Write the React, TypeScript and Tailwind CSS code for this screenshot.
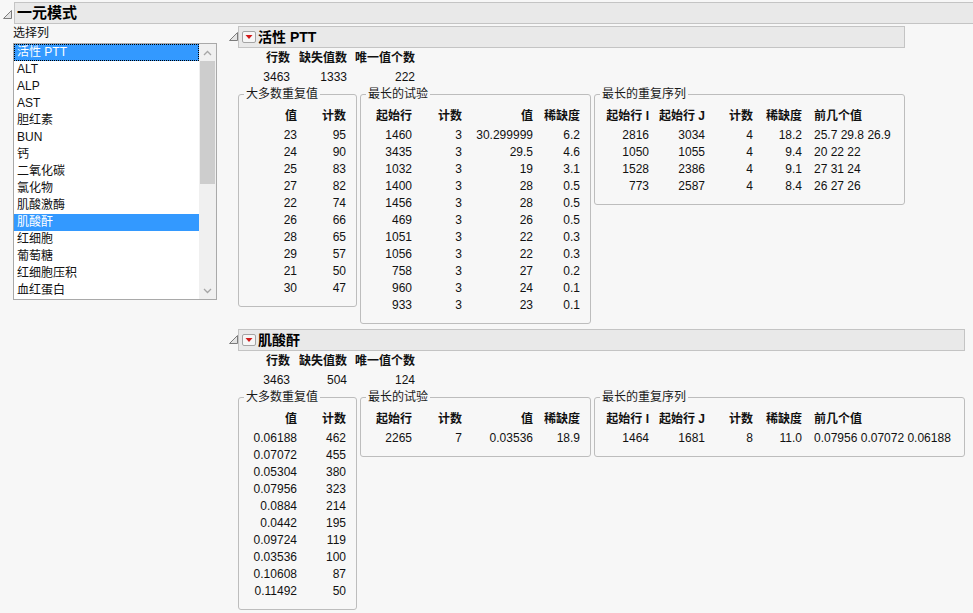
import React from "react"

const FONT = "font-['Liberation_Sans','Noto_Sans_CJK_SC',sans-serif]"

type Cell = string | number

// open disclosure triangle
function Disclosure() {
    return (
        <svg width="9" height="9" viewBox="0 0 9 9" className="shrink-0">
            <polygon points="8.5,0.5 8.5,8.5 0.5,8.5" fill="#e4e4e4" stroke="#7c7c7c" strokeWidth="1" />
        </svg>
    )
}

function RedMenu() {
    return (
        <svg width="14" height="12" viewBox="0 0 14 12" className="shrink-0">
            <rect x="0.5" y="0.5" width="13" height="11" rx="1.5" fill="#f6f6f6" stroke="#a4a4a4" />
            <polygon points="3.5,4 10.5,4 7,8" fill="#d11a1a" />
        </svg>
    )
}

function GroupBox({
    title,
    cols,
    head,
    rows,
    pl,
}: {
    title: string
    cols: { w?: number; left?: boolean }[]
    head: string[]
    rows: Cell[][]
    pl: number
}) {
    const colClass = (i: number) =>
        cols[i].left ? "pl-[12px] pr-[13px] text-left whitespace-nowrap" : "text-right whitespace-nowrap"
    return (
        <fieldset className="border border-[#bdbdbd] rounded-[3px] p-0 m-0 min-w-0">
            <legend className="ml-[5px] px-[2px] leading-[17px] text-[#1a1a1a]">{title}</legend>
            <div className="pt-[5px] pb-[9px]" style={{ paddingLeft: pl }}>
                <div className="flex font-bold leading-[17px] mb-[2px]">
                    {head.map((h, i) => (
                        <div key={i} className={colClass(i)} style={cols[i].w ? { width: cols[i].w } : undefined}>
                            {h}
                        </div>
                    ))}
                    {!cols[cols.length - 1].left && <div className="w-[10px]" />}
                </div>
                {rows.map((r, ri) => (
                    <div key={ri} className="flex leading-[17px]">
                        {r.map((c, i) => (
                            <div key={i} className={colClass(i)} style={cols[i].w ? { width: cols[i].w } : undefined}>
                                {c}
                            </div>
                        ))}
                        {!cols[cols.length - 1].left && <div className="w-[10px]" />}
                    </div>
                ))}
            </div>
        </fieldset>
    )
}

type Report = {
    title: string
    summary: Cell[]
    frequent: Cell[][]
    runs: Cell[][]
    seqs: Cell[][]
}

function ReportBlock({ r }: { r: Report }) {
    return (
        <div className="flex">
            <div className="w-[9px] pt-[6px] shrink-0">
                <Disclosure />
            </div>
            <div className="flex flex-col w-fit">
                <div className="h-[22px] border border-[#c4c4c4] bg-[#e9e9e9] flex items-center gap-[2px] pl-[3px]">
                    <RedMenu />
                    <span className="text-[14px] font-bold leading-[18px] text-black">{r.title}</span>
                </div>
                <div className="mt-[2px] flex font-bold leading-[17px]">
                    <div className="w-[52px] text-right">行数</div>
                    <div className="w-[57px] text-right">缺失值数</div>
                    <div className="w-[68px] text-right">唯一值个数</div>
                </div>
                <div className="mt-[2px] flex leading-[17px]">
                    {r.summary.map((v, i) => (
                        <div key={i} className={["w-[52px]", "w-[57px]", "w-[68px]"][i] + " text-right"}>
                            {v}
                        </div>
                    ))}
                </div>
                <div className="flex items-start gap-[3px]">
                    <GroupBox
                        title="大多数重复值"
                        pl={10}
                        cols={[{ w: 48 }, { w: 49 }]}
                        head={["值", "计数"]}
                        rows={r.frequent}
                    />
                    <GroupBox
                        title="最长的试验"
                        pl={5}
                        cols={[{ w: 46 }, { w: 50 }, { w: 71 }, { w: 47 }]}
                        head={["起始行", "计数", "值", "稀缺度"]}
                        rows={r.runs}
                    />
                    <GroupBox
                        title="最长的重复序列"
                        pl={6}
                        cols={[{ w: 48 }, { w: 56 }, { w: 48 }, { w: 49 }, { left: true }]}
                        head={["起始行 I", "起始行 J", "计数", "稀缺度", "前几个值"]}
                        rows={r.seqs}
                    />
                </div>
            </div>
        </div>
    )
}

const reports: Report[] = [
    {
        title: "活性 PTT",
        summary: [3463, 1333, 222],
        frequent: [
            [23, 95], [24, 90], [25, 83], [27, 82], [22, 74],
            [26, 66], [28, 65], [29, 57], [21, 50], [30, 47],
        ],
        runs: [
            [1460, 3, "30.299999", "6.2"],
            [3435, 3, "29.5", "4.6"],
            [1032, 3, 19, "3.1"],
            [1400, 3, 28, "0.5"],
            [1456, 3, 28, "0.5"],
            [469, 3, 26, "0.5"],
            [1051, 3, 22, "0.3"],
            [1056, 3, 22, "0.3"],
            [758, 3, 27, "0.2"],
            [960, 3, 24, "0.1"],
            [933, 3, 23, "0.1"],
        ],
        seqs: [
            [2816, 3034, 4, "18.2", "25.7 29.8 26.9"],
            [1050, 1055, 4, "9.4", "20 22 22"],
            [1528, 2386, 4, "9.1", "27 31 24"],
            [773, 2587, 4, "8.4", "26 27 26"],
        ],
    },
    {
        title: "肌酸酐",
        summary: [3463, 504, 124],
        frequent: [
            ["0.06188", 462], ["0.07072", 455], ["0.05304", 380], ["0.07956", 323], ["0.0884", 214],
            ["0.0442", 195], ["0.09724", 119], ["0.03536", 100], ["0.10608", 87], ["0.11492", 50],
        ],
        runs: [[2265, 7, "0.03536", "18.9"]],
        seqs: [[1464, 1681, 8, "11.0", "0.07956 0.07072 0.06188"]],
    },
]

const columns = [
    "活性 PTT", "ALT", "ALP", "AST", "胆红素", "BUN", "钙", "二氧化碳",
    "氯化物", "肌酸激酶", "肌酸酐", "红细胞", "葡萄糖", "红细胞压积", "血红蛋白",
]

export default function App() {
    return (
        <div className={`w-[973px] h-[613px] overflow-hidden bg-[#f7f7f7] text-[12px] text-[#111] ${FONT}`}>
            {/* top outline header */}
            <div className="flex items-start pt-[2px]">
                <div className="w-[14px] pl-[3px] pt-[8px] shrink-0">
                    <Disclosure />
                </div>
                <div className="flex-1 h-[22px] border border-[#c4c4c4] border-r-0 bg-[#e9e9e9] flex items-center pl-[2px]">
                    <span className="text-[15px] font-bold leading-[18px] text-black">一元模式</span>
                </div>
            </div>

            <div className="flex">
                {/* column chooser */}
                <div className="w-[229px] shrink-0 pl-[13px] pt-[1px]">
                    <div className="leading-[17px] text-[#111]">选择列</div>
                    <div className="mt-[1px] w-[204px] h-[257px] border border-[#a9a9a9] bg-white flex">
                        <div className="flex-1 flex flex-col">
                            {columns.map((c) => {
                                const sel = c === "活性 PTT" || c === "肌酸酐"
                                const focus = c === "活性 PTT"
                                return (
                                    <div
                                        key={c}
                                        className={`h-[17px] leading-[15px] pl-[2px] ${
                                            sel ? "bg-[#3399ff] text-white" : "text-[#111]"
                                        } ${focus ? "border border-dotted border-black" : "border border-transparent"}`}
                                    >
                                        {c}
                                    </div>
                                )
                            })}
                        </div>
                        <div className="w-[17px] bg-[#f0f0f0] flex flex-col">
                            <div className="h-[17px] flex items-center justify-center">
                                <svg width="9" height="6" viewBox="0 0 9 6">
                                    <polyline points="1,5 4.5,1.5 8,5" fill="none" stroke="#a6a6a6" strokeWidth="1.3" />
                                </svg>
                            </div>
                            <div className="h-[123px] mx-[1px] bg-[#cdcdcd]" />
                            <div className="flex-1" />
                            <div className="h-[17px] flex items-center justify-center">
                                <svg width="9" height="6" viewBox="0 0 9 6">
                                    <polyline points="1,1 4.5,4.5 8,1" fill="none" stroke="#a6a6a6" strokeWidth="1.3" />
                                </svg>
                            </div>
                        </div>
                    </div>
                </div>

                {/* reports */}
                <div className="flex flex-col gap-[5px] pt-[2px]">
                    {reports.map((r) => (
                        <ReportBlock key={r.title} r={r} />
                    ))}
                </div>
            </div>
        </div>
    )
}
